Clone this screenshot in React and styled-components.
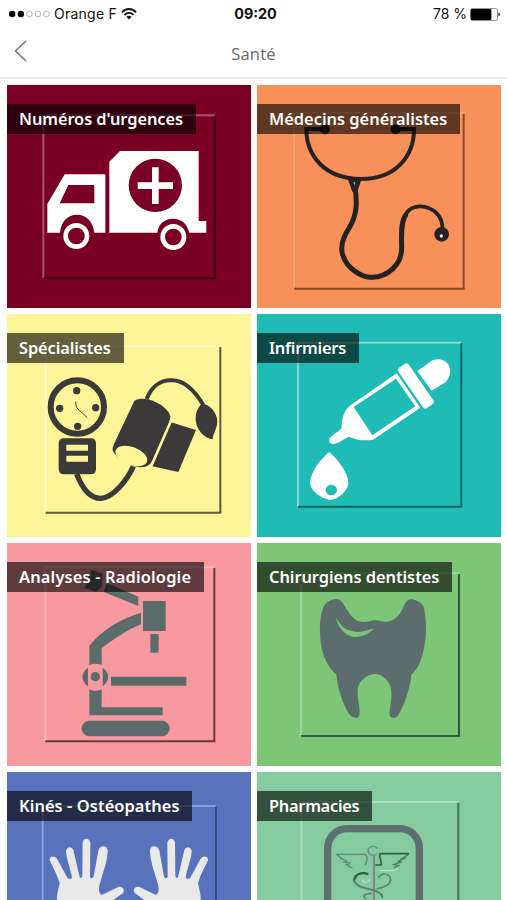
import styled, { createGlobalStyle } from "styled-components";

const GlobalStyle = createGlobalStyle`
  body {
    margin: 0;
    background: #ffffff;
    overflow: hidden;
  }
`;

const Screen = styled.div`
  width: 507px;
  height: 900px;
  overflow: hidden;
  background: #ffffff;
`;

const StatusBar = styled.div`
  display: grid;
  grid-template-columns: 1fr auto 1fr;
  align-items: center;
  height: 28px;
  padding: 0 7px 0 9px;
  box-sizing: border-box;
  font-family: "Inter", sans-serif;
  font-size: 14px;
  line-height: 28px;
  color: #111111;
`;

const StatusGroup = styled.div`
  display: flex;
  align-items: center;
  gap: ${(props) => props.$gap}px;
  justify-content: ${(props) => (props.$end ? "flex-end" : "flex-start")};
`;

const StatusText = styled.span`
  white-space: nowrap;
  letter-spacing: ${(props) => props.$spacing || 0}px;
`;

const Time = styled.span`
  padding-left: 2px;
  font-size: 14.4px;
  font-weight: 700;
`;

const Header = styled.header`
  display: grid;
  grid-template-columns: 50px 1fr 50px;
  align-items: center;
  height: 51px;
  box-sizing: border-box;
  border-bottom: 2px solid #e9e9e9;
`;

const BackButton = styled.button`
  display: flex;
  padding: 0 0 4px 14px;
  border: 0;
  background: none;
`;

const Title = styled.h1`
  margin: 0;
  padding-top: 1px;
  text-align: center;
  font-family: "Open Sans", "Noto Sans", sans-serif;
  font-size: 16.5px;
  font-weight: 500;
  letter-spacing: 0.2px;
  color: #666666;
`;

const Grid = styled.main`
  display: grid;
  grid-template-columns: 243.5px 243.5px;
  grid-auto-rows: 222.6px;
  gap: 6.4px 6.5px;
  padding: 6.1px 7px 0;
`;

const TileCard = styled.section`
  position: relative;
  overflow: hidden;
  background: ${(props) => props.$color};
`;

const Drawing = styled.svg`
  display: block;
  width: 100%;
  height: 100%;
`;

const Label = styled.h2`
  position: absolute;
  top: 19px;
  left: 0;
  width: ${(props) => props.$width}px;
  height: 30px;
  margin: 0;
  padding-left: 12px;
  box-sizing: border-box;
  background: rgba(0, 0, 0, 0.61);
  font-family: "Noto Sans", "Open Sans", sans-serif;
  font-size: 16.4px;
  font-weight: 600;
  line-height: 30px;
  letter-spacing: ${(props) => props.$spacing}px;
  white-space: nowrap;
  color: #ffffff;
`;

function Bevel({ x1, y1, x2, y2, light, dark, width = 6 }) {
  return (
    <g fill="none" strokeWidth={width}>
      <path d={`M${x1} ${y2}V${y1}H${x2}`} stroke={light} />
      <path d={`M${x2} ${y1 + 2}V${y2}H${x1}`} stroke={dark} />
    </g>
  );
}

function Ambulance() {
  return (
    <>
      <Bevel x1={131} y1={106} x2={646} y2={595} light="#a8506f" dark="#3a0013" />
      <path
        fill="#fff"
        fillRule="evenodd"
        d="M195 283H317V458H284C280 424 260 404 232 404C204 404 184 424 181 458H143V372ZM206 315L180 370H284V315Z"
      />
      <path
        fill="#fff"
        d="M361 213H597V423H620V458H569C562 430 545 416 520 416C494 416 476 432 473 458H329V245Z"
      />
      <circle cx="467" cy="316" r="80" fill="#7a0026" />
      <path d="M414 317H520M467 262V372" stroke="#fff" strokeWidth="20" />
      <g fill="none" stroke="#fff" strokeWidth="14">
        <circle cx="230" cy="468" r="32" />
        <circle cx="521" cy="471" r="32" />
      </g>
    </>
  );
}

function Stethoscope() {
  return (
    <>
      <Bevel x1={123} y1={99} x2={632} y2={626} light="#fba77c" dark="#8a4725" />
      <g fill="none" stroke="#242321">
        <path strokeWidth="12" d="M210 147H160C160 225 213 297 325 297C425 297 483 232 483 147H430" />
        <path strokeWidth="15" d="M306 318C312 365 314 402 289 443C268 475 261 503 270 527C282 565 326 593 357 592C405 590 445 555 446 505C446 475 441 425 460 402" />
        <path strokeWidth="11" d="M456 409C468 376 505 374 531 386C556 397 567 418 569 444" />
      </g>
      <g fill="#242321">
        <circle cx="216" cy="148" r="15" />
        <circle cx="428" cy="148" r="15" />
        <path d="M284 296H326L313 335H298Z" />
        <circle cx="566" cy="463" r="22" />
      </g>
      <path d="M301 307H307L304 316Z" fill="#b9c0c4" />
      <circle cx="565" cy="468" r="5" fill="#dfeaf0" />
    </>
  );
}

function BloodPressure() {
  return (
    <>
      <Bevel x1={138} y1={110} x2={662} y2={609} light="#fffac4" dark="#5f5a38" />
      <circle cx="233" cy="292" r="80" fill="none" stroke="#3b393a" strokeWidth="18" />
      <g fill="#3b393a">
        <circle cx="231" cy="243" r="11" />
        <circle cx="180" cy="296" r="11" />
        <circle cx="288" cy="294" r="11" />
        <circle cx="234" cy="350" r="11" />
        <path
          fillRule="evenodd"
          d="M193 386H273Q289 386 289 402V478Q289 494 273 494H193Q177 494 177 478V402Q177 386 193 386ZM200 405V423H265V405ZM200 438V456H265V438Z"
        />
        <path d="M401 280C406 267 423 267 438 268C465 270 507 296 512 319C513 325 510 331 508 338L457 454C450 471 431 474 416 472C389 469 351 448 340 425C337 418 340 411 343 403Z" />
        <path d="M514 338L589 361L536 487L458 470Z" />
        <path d="M605 284C621 279 653 304 653 336C652 359 639 373 639 389C620 388 588 365 588 326C588 307 596 292 605 284Z" />
      </g>
      <path d="M517 330L457 467" stroke="#fef598" strokeWidth="5" />
      <ellipse cx="395" cy="439" rx="50" ry="27" transform="rotate(20 395 439)" fill="#fef598" />
      <g fill="none" stroke="#3b393a">
        <path d="M441 268C455 233 481 211 515 212C557 211 588 248 611 286" strokeWidth="12" />
        <path d="M231 493C253 549 280 567 304 566C342 563 383 510 401 470" strokeWidth="16" />
        <path d="M228 276C229 301 234 295 263 324" strokeWidth="3" />
      </g>
    </>
  );
}

function Dropper() {
  return (
    <>
      <Bevel x1={135} y1={99} x2={625} y2={591} light="#83d9d4" dark="#08655f" />
      <g fill="#fff">
        <path
          fillRule="evenodd"
          d="M431 191L502 294L360 390C333 395 309 390 287 381C270 390 254 402 238 403C228 401 226 390 232 383C244 370 258 366 266 354C265 326 275 299 294 286ZM429 207L302 292L358 377L487 290Z"
        />
        <path d="M438 174L456 162Q463 159 468 166L541 272Q545 279 538 284L521 296Q515 299 510 293L436 186Q433 178 438 174Z" />
        <path d="M493 184L532 156C551 142 580 149 588 168C596 187 589 210 574 220L536 243Z" />
        <path d="M229 427C256 450 286 491 286 520C285 546 251 570 232 571C211 568 172 548 171 517C173 488 203 447 229 427Z" />
      </g>
      <ellipse cx="235" cy="541" rx="17" ry="16" fill="#1fbcb7" />
    </>
  );
}

function Microscope() {
  return (
    <>
      <Bevel x1={137} y1={83} x2={644} y2={605} light="#fdbabc" dark="#69393e" />
      <g fill="#5b6c6b">
        <path d="M276 90L309 103L306 142L290 156L254 145Z" />
        <path d="M321 130L416 171V199L312 157Z" />
        <path d="M430 184H498V274H430Z" />
        <path d="M452 283H477V339H452Z" />
        <path d="M424 219V254C381 271 340 300 306 326V376C294 371 280 371 269 376V318C307 270 366 236 424 219Z" />
        <path d="M265 384V440C243 425 243 399 265 384Z" />
        <path d="M309 384V440C331 425 331 399 309 384Z" />
        <circle cx="287" cy="411" r="14" />
        <path d="M334 411H560V438H334Z" />
        <path d="M269 449C280 455 294 455 306 449V503H489V527H269Z" />
        <path d="M269 543H487C501 543 510 556 510 566C509 579 501 590 487 590H269C256 590 246 579 246 566C246 554 257 543 269 543Z" />
      </g>
    </>
  );
}

function Tooth() {
  return (
    <>
      <Bevel x1={144} y1={101} x2={618} y2={589} light="#9cd99a" dark="#31593a" />
      <path
        fill="#5b6d6c"
        d="M211 202C219 186 238 177 252 178C266 179 275 200 284 213C295 232 311 247 330 247C348 248 352 242 369 242C383 243 383 247 401 246C432 243 443 221 455 193C462 180 473 174 484 180C501 186 512 194 514 209C522 257 520 292 513 326C506 361 493 392 475 405C472 443 454 497 436 526C427 538 413 537 410 526C409 502 419 477 414 449C411 421 385 403 366 402C340 405 316 425 314 449C312 479 323 504 319 528C312 539 298 535 289 524C269 494 253 443 250 404C229 389 213 357 207 329C199 292 197 239 211 202Z"
      />
      <path d="M249 233C264 263 280 273 306 276C326 279 344 271 364 266C344 287 320 294 299 291C273 287 253 260 249 233Z" fill="#7ec677" />
    </>
  );
}

function Hand() {
  return (
    <path
      fill="#e9e9e9"
      d="M172 400C170 380 178 361 180 347C172 319 157 293 150 278C148 265 166 262 173 275L203 330C207 335 216 335 217 329C212 302 198 266 199 249C202 236 215 235 221 247L239 324C241 334 247 332 248 323L249 224C252 210 269 210 272 225L271 326C272 334 280 333 282 326L296 249C300 233 322 231 324 248C324 280 312 307 302 344C296 359 296 378 306 382L356 358C369 354 377 367 370 376L337 400Z"
    />
  );
}

function Hands() {
  return (
    <>
      <Bevel x1={129} y1={115} x2={649} y2={740} light="#86a2db" dark="#2e4c82" />
      <Hand />
      <g transform="translate(775 0) scale(-1 1)">
        <Hand />
      </g>
    </>
  );
}

function Caduceus() {
  return (
    <>
      <Bevel x1={145} y1={103} x2={616} y2={740} light="#a9e0bd" dark="#46745a" />
      <rect x="224" y="183" width="275" height="400" rx="58" fill="none" stroke="#5d6f6e" strokeWidth="22" />
      <g fill="none" strokeWidth="4" strokeLinecap="round">
        <path d="M372 241C364 232 347 236 345 248C345 260 358 266 370 260" stroke="#66917a" />
        <path d="M337 291C344 278 344 268 338 260H251L269 275M263 272L281 280L273 283L293 287L280 291L297 301" stroke="#638875" />
        <path d="M466 260L443 276M457 271L434 281H447L423 291L437 294L424 300" stroke="#567d68" />
        <path d="M466 258H381C376 270 388 280 384 292H369" stroke="#2c6041" strokeWidth="5" />
        <path d="M434 303L426 309H379" stroke="#b5e3c5" />
        <path d="M360 268V420" stroke="#738d83" strokeWidth="12" />
        <path d="M357 267V420" stroke="#bad1c5" strokeWidth="4" />
        <path d="M344 319C326 313 303 320 303 338C308 360 349 362 371 371C385 377 388 382 388 389" stroke="#5b7c6d" strokeWidth="6" />
        <path d="M343 318C325 312 308 321 305 334" stroke="#2e6342" strokeWidth="6" />
        <path d="M377 329C387 312 411 319 413 335C414 350 397 358 373 363" stroke="#62836f" strokeWidth="5" />
        <path d="M355 378C337 376 326 385 338 393" stroke="#5e806c" strokeWidth="5" />
        <path d="M328 337C332 349 345 346 350 336" stroke="#ace0bf" />
      </g>
    </>
  );
}

const tiles = [
  { name: "Numéros d'urgences", color: "#7a0026", width: 188.5, spacing: -0.09, view: "22 15", Art: Ambulance },
  { name: "Médecins généralistes", color: "#f89159", width: 202.5, spacing: 0, view: "12 15", Art: Stethoscope },
  { name: "Spécialistes", color: "#fef598", width: 117, spacing: -0.1, view: "22 13", Art: BloodPressure },
  { name: "Infirmiers", color: "#1fbcb7", width: 102, spacing: -0.25, view: "12 13", Art: Dropper },
  { name: "Analyses - Radiologie", color: "#f7999e", width: 197, spacing: 0.17, view: "22 10", Art: Microscope },
  { name: "Chirurgiens dentistes", color: "#7ec677", width: 195, spacing: -0.05, view: "12 10", Art: Tooth },
  { name: "Kinés - Ostéopathes", color: "#5873bb", width: 185, spacing: 0.08, view: "22 13", Art: Hands },
  { name: "Pharmacies", color: "#84cb9f", width: 115, spacing: -0.27, view: "12 13", Art: Caduceus },
];

export default function App() {
  return (
    <Screen>
      <GlobalStyle />
      <StatusBar>
        <StatusGroup $gap={4}>
          <svg width="41" height="8" viewBox="0 0 41 8">
            <circle cx="3.2" cy="4" r="3.2" fill="#000" />
            <circle cx="11.9" cy="4" r="3.2" fill="#000" />
            <g fill="none" stroke="#a5a5a5" strokeWidth="0.8">
              <circle cx="20.4" cy="4" r="2.9" />
              <circle cx="28.9" cy="4" r="2.9" />
              <circle cx="37.4" cy="4" r="2.9" />
            </g>
          </svg>
          <StatusText $spacing={0.25}>Orange F</StatusText>
          <svg width="16" height="12" viewBox="0 0 16 12">
            <g fill="none" stroke="#111" strokeWidth="1.8">
              <path d="M1 4.3C5-0.1 11-0.1 15 4.3" />
              <path d="M3.4 6.8C6 4.1 10 4.1 12.6 6.8" />
            </g>
            <path d="M8 11.4L5.4 8.8C7 7.5 9 7.5 10.6 8.8Z" fill="#111" />
          </svg>
        </StatusGroup>
        <Time>09:20</Time>
        <StatusGroup $gap={3} $end>
          <StatusText>78 %</StatusText>
          <svg width="30" height="13" viewBox="0 0 30 13">
            <rect x="0.5" y="0.5" width="27" height="12" rx="2" fill="#fff" stroke="#777" strokeWidth="0.8" />
            <rect x="0.8" y="0.9" width="20.6" height="11.2" rx="1" fill="#000" />
            <path d="M28.4 4.5Q30 5 30 6.5T28.4 8.5Z" fill="#222" />
          </svg>
        </StatusGroup>
      </StatusBar>
      <Header>
        <BackButton aria-label="Retour">
          <svg width="13" height="22" viewBox="0 0 13 22">
            <path d="M12 1L1.5 11L12 21" fill="none" stroke="#777" strokeWidth="1.6" />
          </svg>
        </BackButton>
        <Title>Santé</Title>
      </Header>
      <Grid>
        {tiles.map(({ name, color, width, spacing, view, Art }) => (
          <TileCard key={name} $color={color}>
            <Drawing viewBox={`${view} 730.5 667.8`}>
              <Art />
            </Drawing>
            <Label $width={width} $spacing={spacing}>
              {name}
            </Label>
          </TileCard>
        ))}
      </Grid>
    </Screen>
  );
}
